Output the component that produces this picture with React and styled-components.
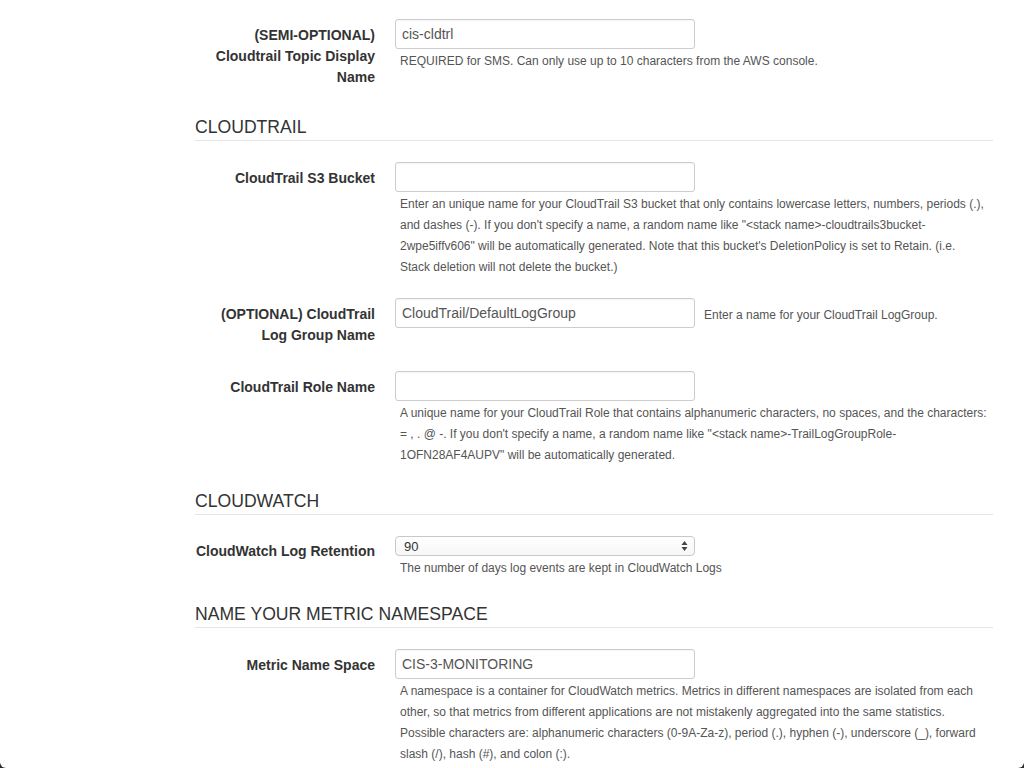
import styled, { createGlobalStyle } from "styled-components";

const GlobalStyle = createGlobalStyle`
    html, body {
        margin: 0;
        padding: 0;
        background: #2b2b2b;
    }
    * {
        box-sizing: border-box;
    }
`

const Page = styled.div`
    width: 1024px;
    height: 768px;
    overflow: hidden;
    background: #ffffff;
    border-radius: 0 0 6px 6px;
    font-family: "Liberation Sans", Arial, sans-serif;
    color: #333;
`

const Form = styled.div`
    width: 798px;
    margin-left: 195px;
    padding-top: 19px;
`

const Heading = styled.h3`
    margin: 25px 0 21px 0;
    padding-bottom: 3px;
    border-bottom: 1px solid #e5e5e5;
    font-size: 17.6px;
    line-height: 20px;
    font-weight: normal;
    color: #333;
`

const Row = styled.div`
    display: grid;
    grid-template-columns: 180px 600px;
    column-gap: 20px;
    align-items: start;
    margin-bottom: ${p => p.$gap ?? 21}px;
`

const Label = styled.label`
    display: block;
    text-align: right;
    padding: ${p => p.$top ?? 6}px 0 4px 0;
    font-size: 14px;
    line-height: 21px;
    font-weight: bold;
    color: #333;
`

const Field = styled.div`
    display: flex;
    flex-direction: ${p => (p.$inline ? "row" : "column")};
    align-items: flex-start;
`

const Input = styled.input`
    width: 300px;
    height: 30px;
    padding: 0 6px;
    border: 1px solid #ccc;
    border-radius: 3px;
    background: #fff;
    font-family: "Liberation Sans", Arial, sans-serif;
    font-size: 14px;
    color: #555;
    box-shadow: inset 0 1px 1px rgba(0, 0, 0, 0.04);
    outline: none;
`

const Select = styled.div`
    width: 300px;
    height: 20px;
    display: flex;
    align-items: center;
    justify-content: space-between;
    padding: 0 6px 0 8px;
    border: 1px solid #c8c8c8;
    border-radius: 4px;
    background: linear-gradient(#ffffff, #f6f6f6);
    font-size: 13px;
    color: #333;
`

const Help = styled.p`
    margin: ${p => (p.$inline ? "0" : "2px 0 0 0")};
    padding: ${p => (p.$inline ? "7px 0 0 9px" : "0 7px 0 5px")};
    font-size: 12px;
    line-height: 21px;
    color: #555;
`

function Arrows() {
    return (
        <svg width="7" height="12" viewBox="0 0 7 12">
            <path d="M3.5 1 L6.5 5 L0.5 5 Z" fill="#444" />
            <path d="M3.5 11 L6.5 7 L0.5 7 Z" fill="#444" />
        </svg>
    )
}

export default function App() {
    return (
        <Page>
            <GlobalStyle />
            <Form>
                <Row $gap={0}>
                    <Label>(SEMI-OPTIONAL)<br />Cloudtrail Topic Display<br />Name</Label>
                    <Field>
                        <Input defaultValue="cis-cldtrl" />
                        <Help>REQUIRED for SMS. Can only use up to 10 characters from the AWS console.</Help>
                    </Field>
                </Row>

                <Heading>CLOUDTRAIL</Heading>

                <Row $gap={20}>
                    <Label>CloudTrail S3 Bucket</Label>
                    <Field>
                        <Input />
                        <Help>
                            Enter an unique name for your CloudTrail S3 bucket that only contains lowercase letters, numbers, periods (.), and dashes (-). If you don't specify a name, a random name like "&lt;stack name&gt;-cloudtrails3bucket-2wpe5iffv606" will be automatically generated. Note that this bucket's DeletionPolicy is set to Retain. (i.e. Stack deletion will not delete the bucket.)
                        </Help>
                    </Field>
                </Row>

                <Row>
                    <Label>(OPTIONAL) CloudTrail<br />Log Group Name</Label>
                    <Field $inline>
                        <Input defaultValue="CloudTrail/DefaultLogGroup" />
                        <Help $inline>Enter a name for your CloudTrail LogGroup.</Help>
                    </Field>
                </Row>

                <Row $gap={0}>
                    <Label>CloudTrail Role Name</Label>
                    <Field>
                        <Input />
                        <Help>
                            A unique name for your CloudTrail Role that contains alphanumeric characters, no spaces, and the characters: = , . @ -. If you don't specify a name, a random name like "&lt;stack name&gt;-TrailLogGroupRole-1OFN28AF4AUPV" will be automatically generated.
                        </Help>
                    </Field>
                </Row>

                <Heading>CLOUDWATCH</Heading>

                <Row $gap={0}>
                    <Label $top={5}>CloudWatch Log Retention</Label>
                    <Field>
                        <Select>
                            <span>90</span>
                            <Arrows />
                        </Select>
                        <Help>The number of days log events are kept in CloudWatch Logs</Help>
                    </Field>
                </Row>

                <Heading>NAME YOUR METRIC NAMESPACE</Heading>

                <Row>
                    <Label>Metric Name Space</Label>
                    <Field>
                        <Input defaultValue="CIS-3-MONITORING" />
                        <Help>
                            A namespace is a container for CloudWatch metrics. Metrics in different namespaces are isolated from each other, so that metrics from different applications are not mistakenly aggregated into the same statistics. Possible characters are: alphanumeric characters (0-9A-Za-z), period (.), hyphen (-), underscore (_), forward slash (/), hash (#), and colon (:).
                        </Help>
                    </Field>
                </Row>
            </Form>
        </Page>
    )
}
